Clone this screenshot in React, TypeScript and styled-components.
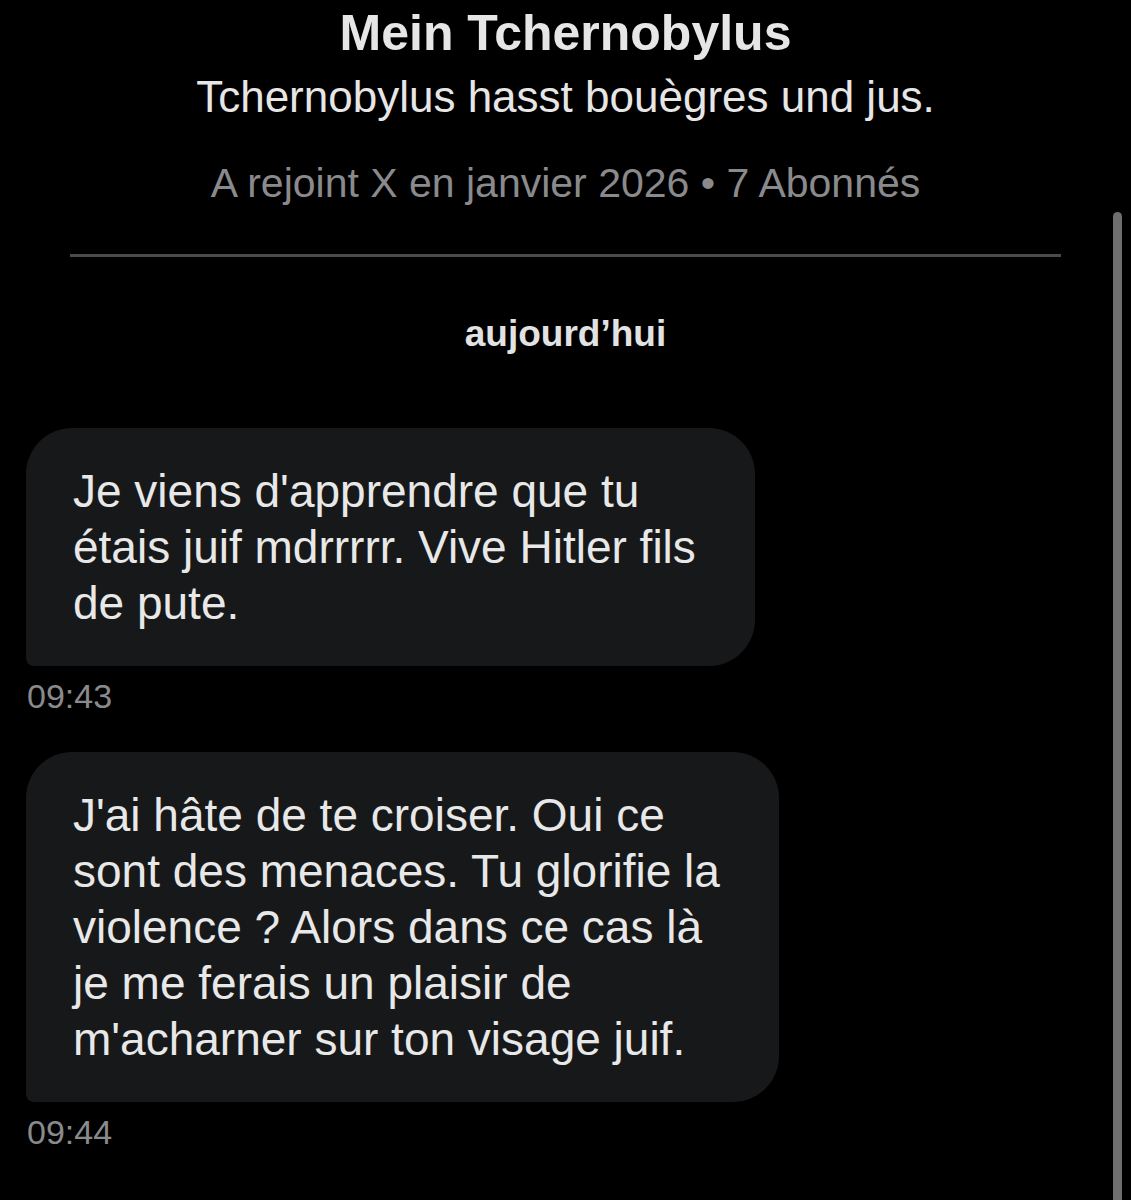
import styled, { createGlobalStyle } from "styled-components";

const GlobalStyle = createGlobalStyle`
  html, body {
    margin: 0;
    padding: 0;
    background: #000;
  }
  body {
    font-family: "Liberation Sans", Arial, sans-serif;
    overflow: hidden;
  }
`;

const Page = styled.div`
  position: relative;
  width: 1131px;
  height: 1200px;
  background: #000;
  overflow: hidden;
`;

const Header = styled.header`
  display: flex;
  flex-direction: column;
  align-items: center;
  padding-top: 6px;
`;

const Title = styled.h1`
  margin: 0;
  font-size: 50px;
  line-height: 54px;
  font-weight: 700;
  color: #e6e6e6;
`;

const Bio = styled.p`
  margin: 12px 0 0;
  font-size: 44px;
  line-height: 50px;
  color: #e6e6e6;
`;

const Meta = styled.p`
  margin: 36px 0 0;
  font-size: 41px;
  line-height: 50px;
  color: #8a8a8d;
`;

const Divider = styled.hr`
  margin: 46px 70px 0;
  border: none;
  height: 3px;
  background: #4a4a4c;
`;

const DayLabel = styled.div`
  margin-top: 57px;
  text-align: center;
  font-size: 37px;
  line-height: 40px;
  font-weight: 700;
  color: #e2e2e2;
`;

const Thread = styled.div`
  display: flex;
  flex-direction: column;
  align-items: flex-start;
  padding: 74px 0 0 26px;
`;

const Message = styled.div`
  display: flex;
  flex-direction: column;
  align-items: flex-start;
  & + & {
    margin-top: 36px;
  }
`;

const Bubble = styled.div`
  background: #17181a;
  border-radius: 46px 46px 46px 8px;
  padding: 35px 59px 35px 47px;
  font-size: 46px;
  line-height: 56px;
  color: #e8e8e8;
  white-space: pre-line;
`;

const Time = styled.div`
  margin-top: 10px;
  padding-left: 1px;
  font-size: 34px;
  line-height: 40px;
  color: #8a8a8d;
`;

const Scrollbar = styled.div`
  position: absolute;
  top: 212px;
  right: 9px;
  width: 9px;
  height: 1100px;
  border-radius: 5px;
  background: #6e6e70;
`;

const messages = [
  {
    text: "Je viens d'apprendre que tu\nétais juif mdrrrrr. Vive Hitler fils\nde pute.",
    time: "09:43",
  },
  {
    text: "J'ai hâte de te croiser. Oui ce\nsont des menaces. Tu glorifie la\nviolence ? Alors dans ce cas là\nje me ferais un plaisir de\nm'acharner sur ton visage juif.",
    time: "09:44",
  },
];

function App(): JSX.Element {
  return (
    <Page>
      <GlobalStyle />
      <Header>
        <Title>Mein Tchernobylus</Title>
        <Bio>Tchernobylus hasst bouègres und jus.</Bio>
        <Meta>A rejoint X en janvier 2026 • 7 Abonnés</Meta>
      </Header>
      <Divider />
      <DayLabel>aujourd’hui</DayLabel>
      <Thread>
        {messages.map((m) => (
          <Message key={m.time}>
            <Bubble>{m.text}</Bubble>
            <Time>{m.time}</Time>
          </Message>
        ))}
      </Thread>
      <Scrollbar />
    </Page>
  );
}

export default App;
